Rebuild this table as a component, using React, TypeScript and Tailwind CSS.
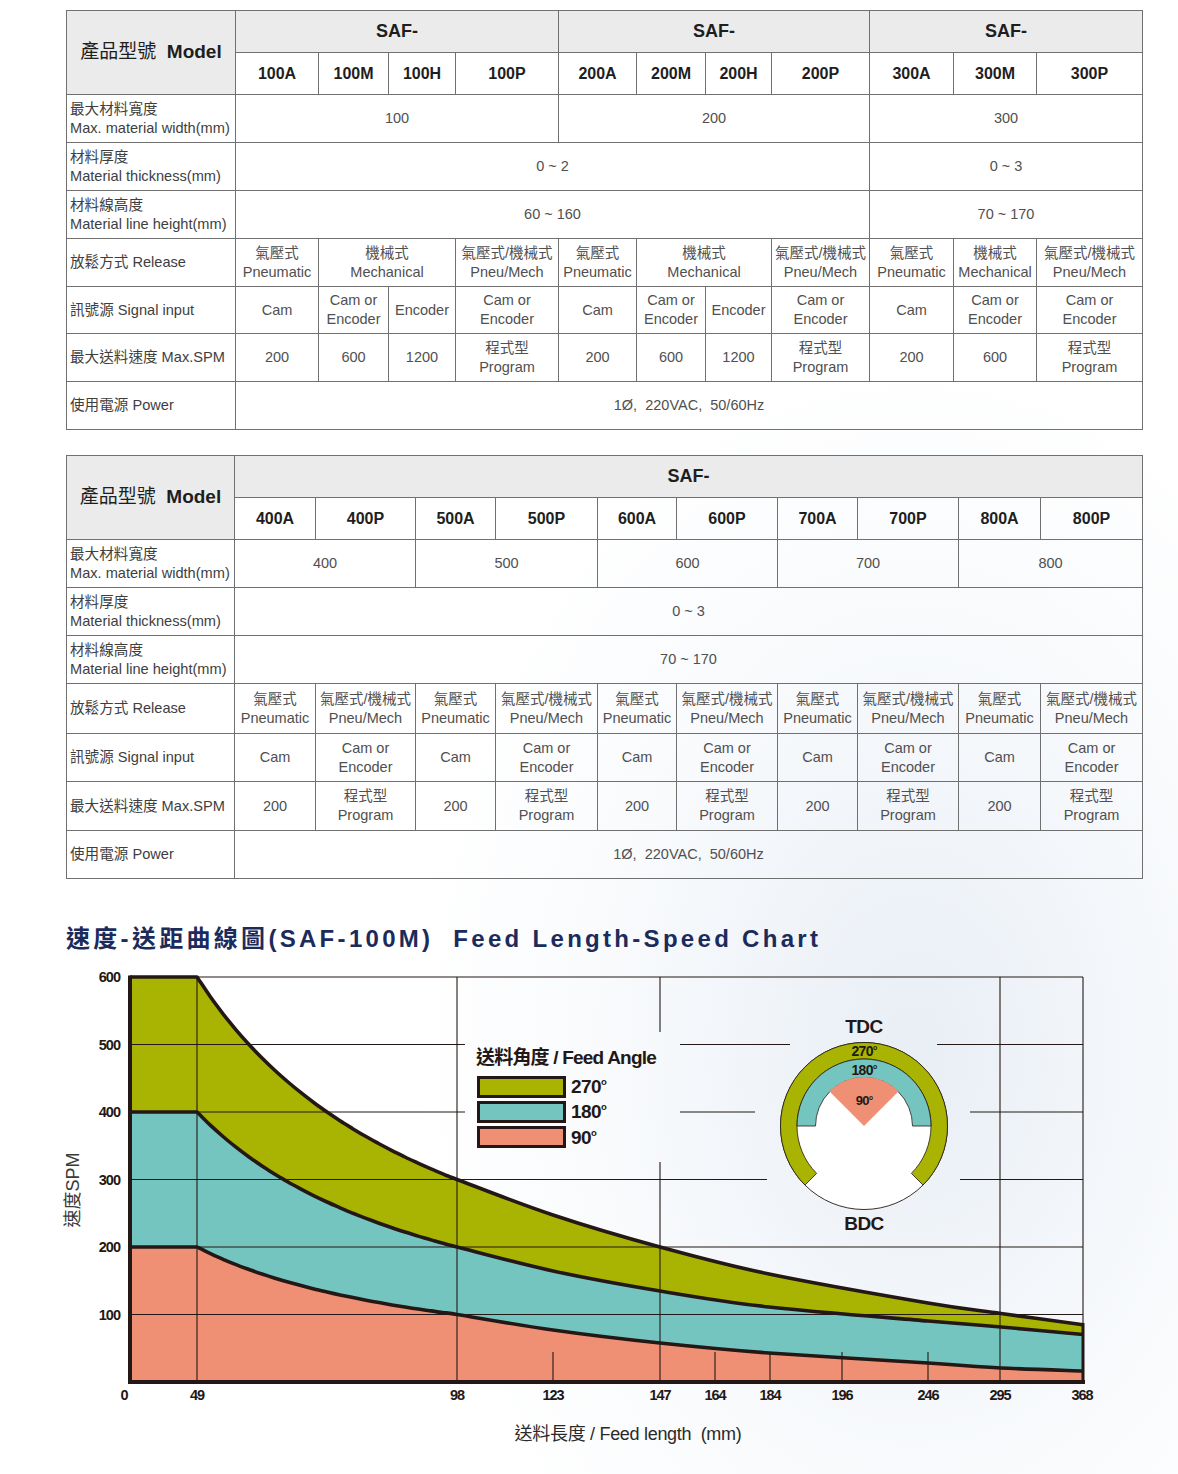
import React from "react";

const FONT = '"Liberation Sans", "Noto Sans CJK TC", Arial, sans-serif';

type Cell = { t: string; s?: number };

const bd = "border border-[#707070]";

function CellText({ t }: { t: string }) {
  const parts = t.split("\n");
  return (
    <>
      {parts.map((p, i) => (
        <div key={i}>{p}</div>
      ))}
    </>
  );
}

function SpecTable({
  cols,
  groups,
  models,
  rows,
  rowH,
}: {
  cols: string[];
  groups: Cell[];
  models: string[];
  rows: { label: string; cells: Cell[] }[];
  rowH: string[];
}) {
  return (
    <table className="w-[1076px] table-fixed border-collapse text-[#505050]">
      <colgroup>
        {cols.map((c, i) => (
          <col key={i} className={c} />
        ))}
      </colgroup>
      <thead>
        <tr className="h-[42px]">
          <th
            rowSpan={2}
            className={`${bd} bg-[#ebebeb] text-[19px] font-normal text-[#1e1e1e] text-center`}
          >
            產品型號&nbsp;&nbsp;<span className="font-bold">Model</span>
          </th>
          {groups.map((g, i) => (
            <th
              key={i}
              colSpan={g.s}
              className={`${bd} bg-[#ebebeb] text-[18px] font-bold text-[#1e1e1e]`}
            >
              {g.t}
            </th>
          ))}
        </tr>
        <tr className="h-[42px]">
          {models.map((m, i) => (
            <th key={i} className={`${bd} text-[16px] font-bold text-[#1e1e1e]`}>
              {m}
            </th>
          ))}
        </tr>
      </thead>
      <tbody>
        {rows.map((r, ri) => (
          <tr key={ri} className={rowH[ri]}>
            <td className={`${bd} text-left pl-[3px] text-[14.6px] leading-[19px] text-[#3e3e3e]`}>
              <CellText t={r.label} />
            </td>
            {r.cells.map((c, ci) => (
              <td
                key={ci}
                colSpan={c.s}
                className={`${bd} text-center text-[14.5px] leading-[19px] whitespace-pre`}
              >
                <CellText t={c.t} />
              </td>
            ))}
          </tr>
        ))}
      </tbody>
    </table>
  );
}

const P = "氣壓式\nPneumatic";
const M = "機械式\nMechanical";
const PM = "氣壓式/機械式\nPneu/Mech";
const CE = "Cam or\nEncoder";
const PG = "程式型\nProgram";
const PWR = "1Ø,  220VAC,  50/60Hz";

const table1 = {
  cols: [
    "w-[169px]", "w-[83px]", "w-[70px]", "w-[67px]", "w-[103px]", "w-[78px]",
    "w-[69px]", "w-[66px]", "w-[98px]", "w-[84px]", "w-[83px]", "w-[106px]",
  ],
  groups: [
    { t: "SAF-", s: 4 },
    { t: "SAF-", s: 4 },
    { t: "SAF-", s: 3 },
  ],
  models: ["100A", "100M", "100H", "100P", "200A", "200M", "200H", "200P", "300A", "300M", "300P"],
  rows: [
    { label: "最大材料寬度\nMax. material width(mm)", cells: [{ t: "100", s: 4 }, { t: "200", s: 4 }, { t: "300", s: 3 }] },
    { label: "材料厚度\nMaterial thickness(mm)", cells: [{ t: "0 ~ 2", s: 8 }, { t: "0 ~ 3", s: 3 }] },
    { label: "材料線高度\nMaterial line height(mm)", cells: [{ t: "60 ~ 160", s: 8 }, { t: "70 ~ 170", s: 3 }] },
    {
      label: "放鬆方式 Release",
      cells: [
        { t: P }, { t: M, s: 2 }, { t: PM }, { t: P }, { t: M, s: 2 }, { t: PM }, { t: P }, { t: M }, { t: PM },
      ],
    },
    {
      label: "訊號源 Signal input",
      cells: [
        { t: "Cam" }, { t: CE }, { t: "Encoder" }, { t: CE }, { t: "Cam" }, { t: CE }, { t: "Encoder" }, { t: CE },
        { t: "Cam" }, { t: CE }, { t: CE },
      ],
    },
    {
      label: "最大送料速度 Max.SPM",
      cells: [
        { t: "200" }, { t: "600" }, { t: "1200" }, { t: PG }, { t: "200" }, { t: "600" }, { t: "1200" }, { t: PG },
        { t: "200" }, { t: "600" }, { t: PG },
      ],
    },
    { label: "使用電源 Power", cells: [{ t: PWR, s: 11 }] },
  ],
  rowH: ["h-[48px]", "h-[48px]", "h-[48px]", "h-[48px]", "h-[47px]", "h-[48px]", "h-[48px]"],
};

const table2 = {
  cols: [
    "w-[168px]", "w-[81px]", "w-[100px]", "w-[80px]", "w-[102px]", "w-[79px]",
    "w-[101px]", "w-[80px]", "w-[101px]", "w-[82px]", "w-[102px]",
  ],
  groups: [{ t: "SAF-", s: 10 }],
  models: ["400A", "400P", "500A", "500P", "600A", "600P", "700A", "700P", "800A", "800P"],
  rows: [
    {
      label: "最大材料寬度\nMax. material width(mm)",
      cells: [{ t: "400", s: 2 }, { t: "500", s: 2 }, { t: "600", s: 2 }, { t: "700", s: 2 }, { t: "800", s: 2 }],
    },
    { label: "材料厚度\nMaterial thickness(mm)", cells: [{ t: "0 ~ 3", s: 10 }] },
    { label: "材料線高度\nMaterial line height(mm)", cells: [{ t: "70 ~ 170", s: 10 }] },
    { label: "放鬆方式 Release", cells: [P, PM, P, PM, P, PM, P, PM, P, PM].map((t) => ({ t })) },
    { label: "訊號源 Signal input", cells: ["Cam", CE, "Cam", CE, "Cam", CE, "Cam", CE, "Cam", CE].map((t) => ({ t })) },
    { label: "最大送料速度 Max.SPM", cells: ["200", PG, "200", PG, "200", PG, "200", PG, "200", PG].map((t) => ({ t })) },
    { label: "使用電源 Power", cells: [{ t: PWR, s: 10 }] },
  ],
  rowH: ["h-[48px]", "h-[48px]", "h-[48px]", "h-[50px]", "h-[48px]", "h-[49px]", "h-[48px]"],
};

const Y = (s: number) => 1380 - s * 0.675;

function firstSeg(s0: number): [number, number][] {
  const pts: [number, number][] = [];
  for (let i = 0; i <= 20; i++) {
    const t = i / 20;
    pts.push([197 + 260 * t, Y(s0 / (1 + t))]);
  }
  return pts;
}

function smooth(pts: [number, number][]) {
  let d = `M${pts[0][0]},${pts[0][1]}`;
  for (let i = 0; i < pts.length - 1; i++) {
    const p0 = pts[i - 1] || pts[i];
    const p1 = pts[i];
    const p2 = pts[i + 1];
    const p3 = pts[i + 2] || p2;
    const c1x = p1[0] + (p2[0] - p0[0]) / 6;
    const c1y = p1[1] + (p2[1] - p0[1]) / 6;
    const c2x = p2[0] - (p3[0] - p1[0]) / 6;
    const c2y = p2[1] - (p3[1] - p1[1]) / 6;
    d += ` C${c1x.toFixed(1)},${c1y.toFixed(1)} ${c2x.toFixed(1)},${c2y.toFixed(1)} ${p2[0]},${p2[1].toFixed(1)}`;
  }
  return d;
}

const greenPts: [number, number][] = [
  ...firstSeg(600),
  [553, 1213], [660, 1245], [769, 1272], [928, 1301], [1001, 1311.5], [1083, 1322.7],
];
const cyanPts: [number, number][] = [
  ...firstSeg(400),
  [553, 1269], [660, 1289], [769, 1305], [928, 1319], [1001, 1325], [1083, 1332.5],
];
const salmonPts: [number, number][] = [
  ...firstSeg(200),
  [553, 1328], [660, 1341], [769, 1351], [928, 1361], [1001, 1366], [1083, 1369],
];

function area(pts: [number, number][], y0: number) {
  const c = smooth(pts).replace(/^M/, "L");
  return `M130,${y0} ${c} L1083,1380 L130,1380 Z`;
}
function line(pts: [number, number][], y0: number) {
  const c = smooth(pts).replace(/^M/, "L");
  return `M130,${y0} ${c}`;
}

const GREEN = "#a9b402";
const CYAN = "#74c5bf";
const SALMON = "#ef8f73";
const INK = "#231815";

const hLines: [number, number, number][] = [
  [975, 130, 1083],
  [1042.5, 130, 465], [1042.5, 680, 790], [1042.5, 937, 1083],
  [1110, 130, 465], [1110, 680, 755], [1110, 970, 1083],
  [1177.5, 130, 767], [1177.5, 960, 1083],
  [1245, 130, 1083],
  [1312.5, 130, 1083],
];
const vLines: [number, number, number][] = [
  [197, 975, 1380], [457, 975, 1380], [660, 975, 1030], [660, 1160, 1380], [1000, 975, 1380], [1083, 975, 1380],
  [553, 1350, 1380], [715, 1350, 1380], [770, 1352, 1380], [842, 1350, 1380], [928, 1350, 1380],
];

const xLabels: [string, number][] = [
  ["0", 124], ["49", 197], ["98", 457], ["123", 553], ["147", 660], ["164", 715],
  ["184", 770], ["196", 842], ["246", 928], ["295", 1000], ["368", 1082],
];

function Deg({ v, x, y, size, anchor }: { v: string; x: number; y: number; size: number; anchor?: "middle" | "start" }) {
  return (
    <text x={x} y={y} fontSize={size} fontWeight="bold" fill={INK} textAnchor={anchor || "start"} letterSpacing={-0.6}>
      {v}
      <tspan fontSize={size * 0.5} dy={-size * 0.42}>o</tspan>
    </text>
  );
}

function Chart() {
  const cx = 864;
  const cy = 1124;
  const k = Math.SQRT1_2;
  const ro = 83.5;
  const ri = 67;
  const rc = 48.5;
  const greenRing = `M${cx - ro * k},${cy + ro * k} A${ro},${ro} 0 1 1 ${cx + ro * k},${cy + ro * k} L${cx + ri * k},${cy + ri * k} A${ri},${ri} 0 1 0 ${cx - ri * k},${cy + ri * k} Z`;
  const cyanRing = `M${cx - ri},${cy} A${ri},${ri} 0 0 1 ${cx + ri},${cy} L${cx + rc},${cy} A${rc},${rc} 0 0 0 ${cx - rc},${cy} Z`;
  const rw = 49;
  const wedge = `M${cx},${cy} L${cx - rw * k},${cy - rw * k} A${rw},${rw} 0 0 1 ${cx + rw * k},${cy - rw * k} Z`;

  return (
    <svg className="block" width="1178" height="522" viewBox="0 952 1178 522" fontFamily={FONT}>
      <path d={area(greenPts, 975)} fill={GREEN} />
      <path d={area(cyanPts, 1110)} fill={CYAN} />
      <path d={area(salmonPts, 1245)} fill={SALMON} />

      {hLines.map(([y, a, b], i) => (
        <line key={"h" + i} x1={a} x2={b} y1={y} y2={y} stroke={INK} strokeWidth={1.1} />
      ))}
      {vLines.map(([x, a, b], i) => (
        <line key={"v" + i} x1={x} x2={x} y1={a} y2={b} stroke={INK} strokeWidth={1.1} />
      ))}

      <path d={line(greenPts, 975)} fill="none" stroke={INK} strokeWidth={3.6} strokeLinejoin="round" />
      <path d={line(cyanPts, 1110)} fill="none" stroke={INK} strokeWidth={3.6} strokeLinejoin="round" />
      <path d={line(salmonPts, 1245)} fill="none" stroke={INK} strokeWidth={3.6} strokeLinejoin="round" />
      <line x1={1083} x2={1083} y1={1321} y2={1381} stroke={INK} strokeWidth={3} />
      <line x1={130} x2={130} y1={973.5} y2={1382} stroke={INK} strokeWidth={4} />
      <line x1={128} x2={1085} y1={1380} y2={1380} stroke={INK} strokeWidth={4} />

      {[600, 500, 400, 300, 200, 100].map((v) => (
        <text key={v} x={120} y={Y(v) + 5} fontSize={14.5} fontWeight="bold" fill={INK} textAnchor="end" letterSpacing={-1}>
          {v}
        </text>
      ))}
      {xLabels.map(([t, x]) => (
        <text key={t} x={x} y={1398} fontSize={14.5} fontWeight="bold" fill={INK} textAnchor="middle" letterSpacing={-1}>
          {t}
        </text>
      ))}

      <text x={0} y={0} fontSize={18} fill="#3a3a3a" textAnchor="middle" transform="translate(79,1188) rotate(-90)">
        速度SPM
      </text>
      <text x={628} y={1438} fontSize={18} fill="#2a2a2a" textAnchor="middle" letterSpacing={-0.3}>
        送料長度 / Feed length&#160;&#160;(mm)
      </text>

      {/* legend */}
      <text x={476} y={1062} fontSize={19} fontWeight="bold" fill={INK} letterSpacing={-0.8}>
        送料角度 / Feed Angle
      </text>
      <rect x={478.5} y={1075.5} width={86} height={19} fill={GREEN} stroke={INK} strokeWidth={3} />
      <rect x={478.5} y={1100.5} width={86} height={19} fill={CYAN} stroke={INK} strokeWidth={3} />
      <rect x={478.5} y={1125.5} width={86} height={19} fill={SALMON} stroke={INK} strokeWidth={3} />
      <Deg v="270" x={571} y={1091} size={19} />
      <Deg v="180" x={571} y={1116} size={19} />
      <Deg v="90" x={571} y={1142} size={19} />

      {/* TDC / BDC diagram */}
      <circle cx={cx} cy={cy} r={ro} fill="white" stroke={INK} strokeWidth={0.9} />
      <path d={greenRing} fill={GREEN} stroke={INK} strokeWidth={0.8} />
      <path d={cyanRing} fill={CYAN} stroke={INK} strokeWidth={0.8} />
      <path d={wedge} fill={SALMON} />
      <Deg v="270" x={cx} y={1054} size={14} anchor="middle" />
      <Deg v="180" x={cx} y={1073} size={14} anchor="middle" />
      <Deg v="90" x={cx} y={1103} size={13} anchor="middle" />
      <text x={cx} y={1031} fontSize={19} fontWeight="bold" fill={INK} textAnchor="middle" letterSpacing={-0.5}>
        TDC
      </text>
      <text x={cx} y={1228} fontSize={19} fontWeight="bold" fill={INK} textAnchor="middle" letterSpacing={-0.5}>
        BDC
      </text>
    </svg>
  );
}

export default function App() {
  return (
    <div
      className="relative w-[1178px] h-[1474px] overflow-hidden bg-white"
      style={{ fontFamily: FONT }}
    >
      <div className="pointer-events-none absolute left-[420px] top-[360px] w-[900px] h-[1150px] bg-[radial-gradient(ellipse_at_55%_60%,rgba(205,218,234,0.45),rgba(230,237,245,0.25)_45%,transparent_72%)]" />
      <div className="relative">
        <div className="pl-[66px] pt-[10px]">
          <SpecTable {...table1} />
          <div className="h-[25px]" />
          <SpecTable {...table2} />
          <div className="mt-[45px] h-[30px] leading-[30px] text-[24px] font-bold tracking-[3.3px] text-[#1b2b5c] whitespace-pre">
            速度-送距曲線圖(SAF-100M)  Feed Length-Speed Chart
          </div>
        </div>
        <Chart />
      </div>
    </div>
  );
}
